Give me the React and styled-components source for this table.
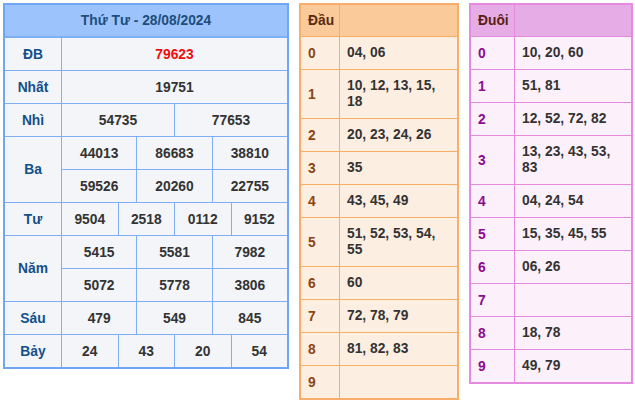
import React from 'react';
import styled, { createGlobalStyle } from 'styled-components';

const GlobalStyle = createGlobalStyle`
  body {
    margin: 0;
    background: #fff;
    font-family: "Liberation Sans", Arial, sans-serif;
  }
`;

const Board = styled.div`
  display: flex;
  align-items: flex-start;
  gap: 10px;
  padding: 3px 0 0 3px;
`;

/* bảng kết quả */
const Result = styled.div`
  width: 286px;
  box-sizing: border-box;
  display: grid;
  grid-template-columns: 56px repeat(12, 1fr);
  grid-auto-rows: 32px;
  gap: 1px;
  border: 2px solid #70a6f6;
  background: #7eaef5;
`;

const Title = styled.div`
  grid-column: 1 / -1;
  height: 31px;
  background: #9cc3fb;
  color: #1d4e7c;
  font-weight: bold;
  font-size: 13.8px;
  display: flex;
  align-items: center;
  justify-content: center;
`;

const Prize = styled.div`
  grid-row: span ${(p) => p.rows || 1};
  background: #f3f5f9;
  color: #124f8a;
  font-weight: bold;
  font-size: 13.8px;
  display: flex;
  align-items: center;
  justify-content: center;
`;

const Num = styled.div`
  grid-column: span ${(p) => p.span};
  background: #f3f5f9;
  color: ${(p) => (p.special ? '#f20d0d' : '#333')};
  font-weight: bold;
  font-size: 13.8px;
  display: flex;
  align-items: center;
  justify-content: center;
`;

/* bảng đầu / đuôi */
const Loto = styled.div`
  width: ${(p) => p.width}px;
  box-sizing: border-box;
  display: grid;
  grid-template-columns: ${(p) => p.labelWidth}px 1fr;
  gap: 1px;
  border: 2px solid ${(p) => p.line};
  background: ${(p) => p.line};
`;

const LotoHead = styled.div`
  height: 31px;
  background: ${(p) => p.bg};
  color: ${(p) => p.color};
  font-weight: bold;
  font-size: 13.8px;
  display: flex;
  align-items: center;
  padding-left: 7px;
`;

const LotoKey = styled.div`
  background: ${(p) => p.bg};
  color: ${(p) => p.color};
  font-weight: bold;
  font-size: 13.8px;
  padding-left: 7px;
  display: flex;
  align-items: center;
  min-height: 32px;
`;

const LotoVal = styled.div`
  background: ${(p) => p.bg};
  color: #333;
  font-weight: bold;
  font-size: 13.8px;
  line-height: 16px;
  padding: 8px 10px 8px 7px;
  display: flex;
  align-items: center;
`;

const prizes = [
  { name: 'ĐB', rows: [['79623']], special: true },
  { name: 'Nhất', rows: [['19751']] },
  { name: 'Nhì', rows: [['54735', '77653']] },
  { name: 'Ba', rows: [['44013', '86683', '38810'], ['59526', '20260', '22755']] },
  { name: 'Tư', rows: [['9504', '2518', '0112', '9152']] },
  { name: 'Năm', rows: [['5415', '5581', '7982'], ['5072', '5778', '3806']] },
  { name: 'Sáu', rows: [['479', '549', '845']] },
  { name: 'Bảy', rows: [['24', '43', '20', '54']] },
];

const dau = ['04, 06', '10, 12, 13, 15, 18', '20, 23, 24, 26', '35', '43, 45, 49', '51, 52, 53, 54, 55', '60', '72, 78, 79', '81, 82, 83', ''];
const duoi = ['10, 20, 60', '51, 81', '12, 52, 72, 82', '13, 23, 43, 53, 83', '04, 24, 54', '15, 35, 45, 55', '06, 26', '', '18, 78', '49, 79'];

const themes = {
  dau: { title: 'Đầu', line: '#f8ad68', head: '#fbca9b', headText: '#5a2a0c', key: '#8a4511', cell: '#fdeee2', width: 160, labelWidth: 38 },
  duoi: { title: 'Đuôi', line: '#e48ae0', head: '#e5ace6', headText: '#5a1e10', key: '#8b0b8e', cell: '#fcf0fa', width: 164, labelWidth: 43 },
};

const LotoTable = ({ kind, data }) => {
  const t = themes[kind];
  return (
    <Loto width={t.width} labelWidth={t.labelWidth} line={t.line}>
      <LotoHead bg={t.head} color={t.headText}>{t.title}</LotoHead>
      <LotoHead bg={t.head} />
      {data.map((v, i) => (
        <React.Fragment key={i}>
          <LotoKey bg={t.cell} color={t.key}>{i}</LotoKey>
          <LotoVal bg={t.cell}>{v}</LotoVal>
        </React.Fragment>
      ))}
    </Loto>
  );
};

export default function App() {
  return (
    <>
      <GlobalStyle />
      <Board>
        <Result>
          <Title>Thứ Tư - 28/08/2024</Title>
          {prizes.map((p) => (
            <React.Fragment key={p.name}>
              <Prize rows={p.rows.length}>{p.name}</Prize>
              {p.rows.map((row, r) =>
                row.map((n, i) => (
                  <Num key={`${r}-${i}`} span={12 / row.length} special={p.special}>{n}</Num>
                ))
              )}
            </React.Fragment>
          ))}
        </Result>
        <LotoTable kind="dau" data={dau} />
        <LotoTable kind="duoi" data={duoi} />
      </Board>
    </>
  );
}
